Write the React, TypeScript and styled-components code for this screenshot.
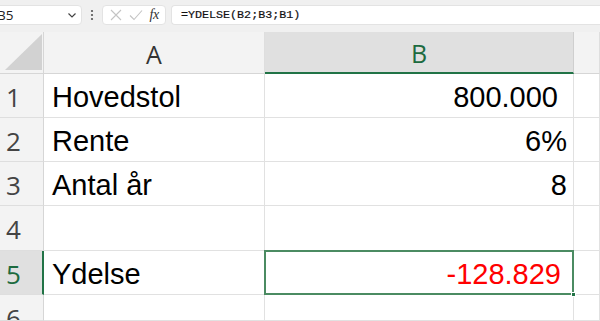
import React from "react";
import styled, { createGlobalStyle } from "styled-components";

const Global = createGlobalStyle`
  html, body { margin: 0; padding: 0; background: #ffffff; overflow: hidden; }
  #root { width: 600px; height: 321px; overflow: hidden; }
`;

const Page = styled.div`
  width: 600px;
  height: 321px;
  display: flex;
  flex-direction: column;
  background: #f0f0f0;
  overflow: hidden;
`;

const FormulaBar = styled.div`
  flex: none;
  height: 32px;
  display: flex;
  align-items: flex-start;
  padding-top: 5px;
  box-sizing: border-box;
  background: #f0f0f0;
`;

const Box = styled.div<{ $w?: number; $ml?: number; $grow?: boolean }>`
  height: 20px;
  box-sizing: border-box;
  background: #ffffff;
  border: 1px solid #e3e3e3;
  border-radius: 4px;
  display: flex;
  align-items: center;
  margin-left: ${(p) => p.$ml ?? 0}px;
  ${(p) => (p.$w ? `width: ${p.$w}px; flex: none;` : "")}
  ${(p) => (p.$grow ? "flex: 1; border-right: none; border-top-right-radius: 0; border-bottom-right-radius: 0;" : "")}
`;

const NameBox = styled(Box)`
  margin-left: -6px;
  justify-content: space-between;
  padding: 0 4px 0 0;
  overflow: hidden;
`;

const NameText = styled.span`
  font-family: "Open Sans", "Liberation Sans", sans-serif;
  font-size: 13.5px;
  color: #222;
  margin-left: 2px;
`;

const Dots = styled.div`
  width: 20px;
  display: flex;
  justify-content: center;
  align-items: center;
  height: 20px;
`;

const IconBox = styled(Box)`
  justify-content: space-around;
  padding: 0 3px 0 4px;
`;

const Fx = styled.span`
  font-family: "Liberation Serif", serif;
  font-style: italic;
  font-size: 14px;
  color: #333;
  letter-spacing: -0.5px;
`;

const FormulaText = styled.span`
  font-family: "Liberation Mono", monospace;
  font-size: 11.7px;
  color: #111;
  margin-left: 9px;
  -webkit-text-stroke: 0.2px #111;
`;

const Sheet = styled.div`
  flex: 1;
  min-height: 0;
  overflow: hidden;
  display: grid;
  grid-template-columns: 44px 221px 309px 1fr;
  grid-template-rows: 42px 44px 44px 44px 45px 44px minmax(0, 1fr);
  background: #ffffff;
`;

const Corner = styled.div`
  background: #f3f3f3;
  border-bottom: 1px solid #d6d6d6;
  border-right: 1px solid #d6d6d6;
  box-sizing: border-box;
  display: flex;
  align-items: flex-end;
  justify-content: flex-end;
  padding: 0 1px 3px 0;
`;

const ColHeader = styled.div<{ $sel?: boolean }>`
  box-sizing: border-box;
  background: ${(p) => (p.$sel ? "#e0e0e0" : "#f3f3f3")};
  border-right: 1px solid ${(p) => (p.$sel ? "#cfcfcf" : "#dedede")};
  border-bottom: ${(p) => (p.$sel ? "2px solid #217346" : "1px solid #d6d6d6")};
  color: ${(p) => (p.$sel ? "#1d6b3f" : "#333")};
  font-family: "Open Sans", "Liberation Sans", sans-serif;
  font-size: 25px;
  display: flex;
  align-items: center;
  justify-content: center;
  padding-top: 2px;
`;

const RowHeader = styled.div<{ $sel?: boolean }>`
  box-sizing: border-box;
  min-height: 0;
  overflow: hidden;
  background: ${(p) => (p.$sel ? "#e0e0e0" : "#f3f3f3")};
  border-right: ${(p) => (p.$sel ? "2px solid #217346" : "1px solid #d6d6d6")};
  border-bottom: 1px solid #dedede;
  color: ${(p) => (p.$sel ? "#1d6b3f" : "#444")};
  font-family: "Open Sans", "Liberation Sans", sans-serif;
  font-size: 26px;
  line-height: 44px;
  display: flex;
  align-items: flex-start;
  padding-left: 6px;
  padding-top: 1px;
`;

const Cell = styled.div<{ $right?: boolean; $pr?: number; $red?: boolean; $active?: boolean }>`
  position: relative;
  box-sizing: border-box;
  min-height: 0;
  border-right: 1px solid #e1e1e1;
  border-bottom: 1px solid #e1e1e1;
  font-family: "Liberation Sans", Arial, sans-serif;
  font-size: 29px;
  color: ${(p) => (p.$red ? "#ff0000" : "#000")};
  display: flex;
  align-items: center;
  justify-content: ${(p) => (p.$right ? "flex-end" : "flex-start")};
  padding-left: 8px;
  padding-right: ${(p) => p.$pr ?? 6}px;
  padding-top: 3px;
  white-space: nowrap;
  ${(p) =>
    p.$active
      ? `
    &::after {
      content: "";
      position: absolute;
      left: -1px; top: -1px; right: -1px; bottom: -1px;
      border: 2px solid #4b8b62;
      box-sizing: border-box;
      pointer-events: none;
    }
    &::before {
      content: "";
      position: absolute;
      right: -3px; bottom: -3px;
      width: 5px; height: 5px;
      background: #217346;
      border: 1px solid #fff;
      box-sizing: border-box;
      z-index: 2;
    }
  `
      : ""}
`;

const rows: { n: number; a: string; b: string; pr: number; red?: boolean }[] = [
  { n: 1, a: "Hovedstol", b: "800.000", pr: 15 },
  { n: 2, a: "Rente", b: "6%", pr: 6 },
  { n: 3, a: "Antal år", b: "8", pr: 6 },
  { n: 4, a: "", b: "", pr: 6 },
  { n: 5, a: "Ydelse", b: "-128.829", pr: 12, red: true },
  { n: 6, a: "", b: "", pr: 6 },
];

export default function App() {
  return (
    <Page>
      <Global />
      <FormulaBar>
        <NameBox $w={88}>
          <NameText>B5</NameText>
          <svg width="10" height="10" viewBox="0 0 10 10">
            <path d="M1.5 3.5 L5 7 L8.5 3.5" fill="none" stroke="#444" strokeWidth="1.2" />
          </svg>
        </NameBox>
        <Dots>
          <svg width="4" height="12" viewBox="0 0 4 12">
            <circle cx="2" cy="2" r="1.1" fill="#555" />
            <circle cx="2" cy="6" r="1.1" fill="#555" />
            <circle cx="2" cy="10" r="1.1" fill="#555" />
          </svg>
        </Dots>
        <IconBox $w={64}>
          <svg width="12" height="12" viewBox="0 0 12 12">
            <path d="M1 1 L11 11 M11 1 L1 11" stroke="#c4c4c4" strokeWidth="1.1" fill="none" />
          </svg>
          <svg width="14" height="12" viewBox="0 0 14 12">
            <path d="M1 6.5 L5 10.5 L13 1.5" stroke="#c4c4c4" strokeWidth="1.1" fill="none" />
          </svg>
          <Fx>fx</Fx>
        </IconBox>
        <Box $grow $ml={5}>
          <FormulaText>=YDELSE(B2;B3;B1)</FormulaText>
        </Box>
      </FormulaBar>
      <Sheet>
        <Corner>
          <svg width="37" height="36" viewBox="0 0 37 36">
            <path d="M37 0 L37 36 L0 36 Z" fill="#d2d2d2" />
          </svg>
        </Corner>
        <ColHeader>A</ColHeader>
        <ColHeader $sel>B</ColHeader>
        <ColHeader />
        {rows.map((r) => (
          <React.Fragment key={r.n}>
            <RowHeader $sel={r.n === 5}>{r.n}</RowHeader>
            <Cell>{r.a}</Cell>
            <Cell $right $pr={r.pr} $red={r.red} $active={r.n === 5}>
              {r.b}
            </Cell>
            <Cell />
          </React.Fragment>
        ))}
      </Sheet>
    </Page>
  );
}
